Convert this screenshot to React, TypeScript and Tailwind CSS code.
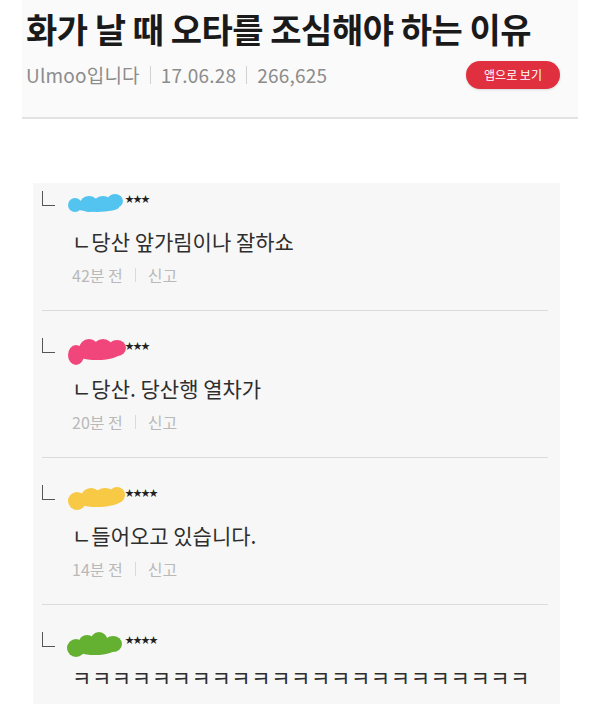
import React from "react";

const FONT = { fontFamily: '"Noto Sans CJK KR", "Noto Sans", sans-serif' };

type Comment = {
  color: string;
  stars: number;
  text: string;
  time?: string;
  blob: [number, number, number, number][];
};

// blurred nicknames, each one a few overlapping ellipses
const COMMENTS: Comment[] = [
  {
    color: "#53c4ef",
    stars: 3,
    text: "ㄴ당산 앞가림이나 잘하쇼",
    time: "42분 전",
    blob: [
      [8, 16, 7, 7],
      [22, 15, 9, 8],
      [36, 14, 9, 7],
      [48, 12, 8, 7],
      [30, 18, 22, 5],
    ],
  },
  {
    color: "#f1467b",
    stars: 3,
    text: "ㄴ당산. 당산행 열차가",
    time: "20분 전",
    blob: [
      [9, 19, 8, 10],
      [22, 13, 10, 10],
      [36, 12, 10, 9],
      [50, 12, 9, 8],
      [30, 16, 24, 8],
    ],
  },
  {
    color: "#f7c945",
    stars: 4,
    text: "ㄴ들어오고 있습니다.",
    time: "14분 전",
    blob: [
      [10, 18, 9, 9],
      [24, 14, 10, 9],
      [38, 13, 10, 8],
      [50, 12, 8, 8],
      [30, 17, 24, 7],
    ],
  },
  {
    color: "#64b030",
    stars: 4,
    text: "ㅋㅋㅋㅋㅋㅋㅋㅋㅋㅋㅋㅋㅋㅋㅋㅋㅋㅋㅋㅋㅋㅋㅋ",
    blob: [
      [9, 18, 9, 9],
      [20, 12, 8, 7],
      [32, 12, 9, 10],
      [46, 14, 9, 8],
      [28, 17, 22, 8],
    ],
  },
];

function Blob({ c }: { c: Comment }) {
  return (
    <svg width="62" height="30" viewBox="0 0 62 30" className="shrink-0 overflow-visible">
      <g fill={c.color}>
        {c.blob.map(([cx, cy, rx, ry], i) => (
          <ellipse key={i} cx={cx} cy={cy} rx={rx} ry={ry} />
        ))}
      </g>
    </svg>
  );
}

function CommentRow({ c, first, last }: { c: Comment; first: boolean; last: boolean }) {
  return (
    <div
      className={[
        first ? "pt-[8px]" : "pt-[27px]",
        last ? "" : "pb-[25px] border-b border-[#dcdcdc]",
      ].join(" ")}
    >
      <div className="flex items-start h-[24px]">
        <div className="w-[13px] h-[15px] border-l-[1.5px] border-b-[1.5px] border-[#555] shrink-0" />
        <div className="flex items-start ml-[12px] -mt-[2px]">
          <Blob c={c} />
          <span className="-ml-[4px] mt-[5px] text-[9px] leading-none text-[#222] tracking-[-1px]">
            {"★".repeat(c.stars)}
          </span>
        </div>
      </div>
      <div
        className={
          "pl-[30px] text-[21px] leading-[30px] text-[#2e2e2e] " +
          (c.time ? "mt-[11px]" : "mt-[6px] tracking-[0.6px]")
        }
      >
        {c.text}
      </div>
      {c.time && (
        <div className="pl-[30px] mt-[9px] flex items-center text-[16px] leading-[20px] text-[#b9b9b9]">
          <span>{c.time}</span>
          <span className="mx-[12px] w-px h-[14px] bg-[#dadada]" />
          <span>신고</span>
        </div>
      )}
    </div>
  );
}

export default function App() {
  return (
    <div className="w-[600px] h-[704px] overflow-hidden bg-white" style={FONT}>
      {/* header */}
      <div className="mx-[22px] bg-[#fafafa] border-b-2 border-[#e2e2e2] pl-[4px] pr-[18px] pt-[7px] pb-[28px]">
        <h1 className="text-[34px] font-bold leading-[44px] text-[#1a1a1a] tracking-[-0.5px]">
          화가 날 때 오타를 조심해야 하는 이유
        </h1>
        <div className="flex items-center justify-between mt-[10px] h-[28px]">
          <div className="flex items-center text-[19px] text-[#8c8c8c] tracking-[0.2px]">
            <span>Ulmoo입니다</span>
            <span className="mx-[10px] w-px h-[18px] bg-[#d2d2d2]" />
            <span>17.06.28</span>
            <span className="mx-[10px] w-px h-[18px] bg-[#d2d2d2]" />
            <span>266,625</span>
          </div>
          <div className="bg-[#e0303f] text-white text-[12px] rounded-full w-[94px] h-[28px] flex items-center justify-center shadow-sm">
            앱으로 보기
          </div>
        </div>
      </div>

      {/* comments */}
      <div className="ml-[33px] w-[527px] mt-[64px] bg-[#f7f7f7] pl-[9px] pr-[12px] pb-[20px]">
        {COMMENTS.map((c, i) => (
          <CommentRow key={i} c={c} first={i === 0} last={i === COMMENTS.length - 1} />
        ))}
      </div>
    </div>
  );
}
